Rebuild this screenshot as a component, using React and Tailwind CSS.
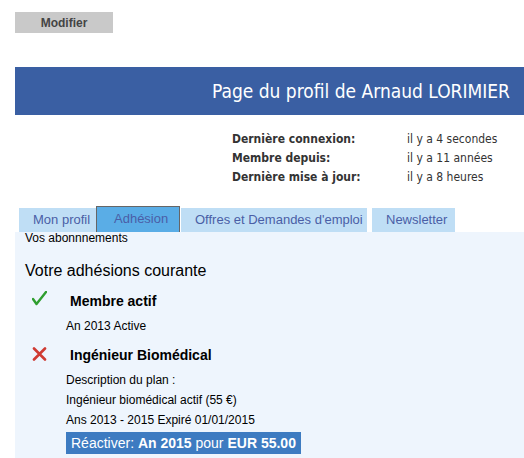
import React from 'react'

const tahoma = { fontFamily: '"DejaVu Sans Condensed", "DejaVu Sans", sans-serif' }

function Check() {
  return (
    <svg width="15" height="15" viewBox="0 0 15 15">
      <path d="M1 8 L4.5 13 L14 1" fill="none" stroke="#2f9e2f" strokeWidth="2.4" strokeLinecap="round" strokeLinejoin="round" />
    </svg>
  )
}

function Cross() {
  return (
    <svg width="15" height="14" viewBox="0 0 15 14">
      <path d="M2 1.5 L13 12.5 M13 1.5 L2 12.5" fill="none" stroke="#cf3a32" strokeWidth="2.6" strokeLinecap="round" />
    </svg>
  )
}

export default function App() {
  return (
    <div className="min-h-[458px] bg-white font-['Liberation_Sans',Arial,sans-serif] text-black">
      <div className="pl-[15px] pt-[12px]">
        <button className="w-[98px] h-[21px] bg-[#c9c9c9] text-[12px] font-bold text-[#444] flex items-center justify-center">
          Modifier
        </button>
      </div>

      <div className="ml-[15px] mt-[34px] h-[48px] bg-[#3a5fa3] flex items-center justify-end pr-[14px]">
        <h1 style={tahoma} className="text-white text-[19px]">Page du profil de Arnaud LORIMIER</h1>
      </div>

      <div style={tahoma} className="pl-[232px] pt-[15px] text-[12px] text-[#333] leading-[19px]">
        {[
          ['Dernière connexion:', 'il y a 4 secondes'],
          ['Membre depuis:', 'il y a 11 années'],
          ['Dernière mise à jour:', 'il y a 8 heures'],
        ].map(([k, v]) => (
          <div key={k} className="flex">
            <span className="w-[175px] font-bold">{k}</span>
            <span>{v}</span>
          </div>
        ))}
      </div>

      <div className="ml-[19px] mt-[21px] flex items-end h-[24px] text-[13px] text-[#4a5ea6]">
        <div className="w-[77px] h-[24px] pl-[14px] bg-[#bfdef5] flex items-center">Mon profil</div>
        <div className="w-[84px] h-[26px] pl-[17px] pb-[1px] bg-[#5aade6] border border-[#666] border-b-0 flex items-center">Adhésion</div>
        <div className="ml-[1px] w-[186px] h-[24px] pl-[14px] bg-[#bfdef5] flex items-center">Offres et Demandes d'emploi</div>
        <div className="ml-[5px] w-[83px] h-[24px] pl-[14px] bg-[#bfdef5] flex items-center">Newsletter</div>
      </div>

      <div className="ml-[15px] bg-[#eef5fd] pl-[10px] h-[226px]">
        <div className="text-[12px] leading-[12px]">Vos abonnnements</div>
        <div className="text-[16px] leading-[20px] mt-[17px]">Votre adhésions courante</div>

        <div className="flex items-center h-[20px] mt-[10px] pl-[7px]">
          <div className="-mt-[5px]"><Check /></div>
          <span className="ml-[23px] text-[14px] font-bold">Membre actif</span>
        </div>
        <div className="pl-[41px] text-[12px] leading-[20px] mt-[5px]">An 2013 Active</div>

        <div className="flex items-center h-[20px] mt-[9px] pl-[7px]">
          <div className="-mt-[3px]"><Cross /></div>
          <span className="ml-[23px] text-[14px] font-bold">Ingénieur Biomédical</span>
        </div>
        <div className="pl-[41px] text-[12px] leading-[20px] mt-[5px]">
          <div>Description du plan :</div>
          <div>Ingénieur biomédical actif (55 €)</div>
          <div>Ans 2013 - 2015 Expiré 01/01/2015</div>
          <div className="mt-[2px] inline-block bg-[#3d7bc1] text-white text-[14px] px-[5px] h-[22px] leading-[22px]">
            Réactiver: <b>An 2015</b> pour <b>EUR 55.00</b>
          </div>
        </div>
      </div>
    </div>
  )
}
